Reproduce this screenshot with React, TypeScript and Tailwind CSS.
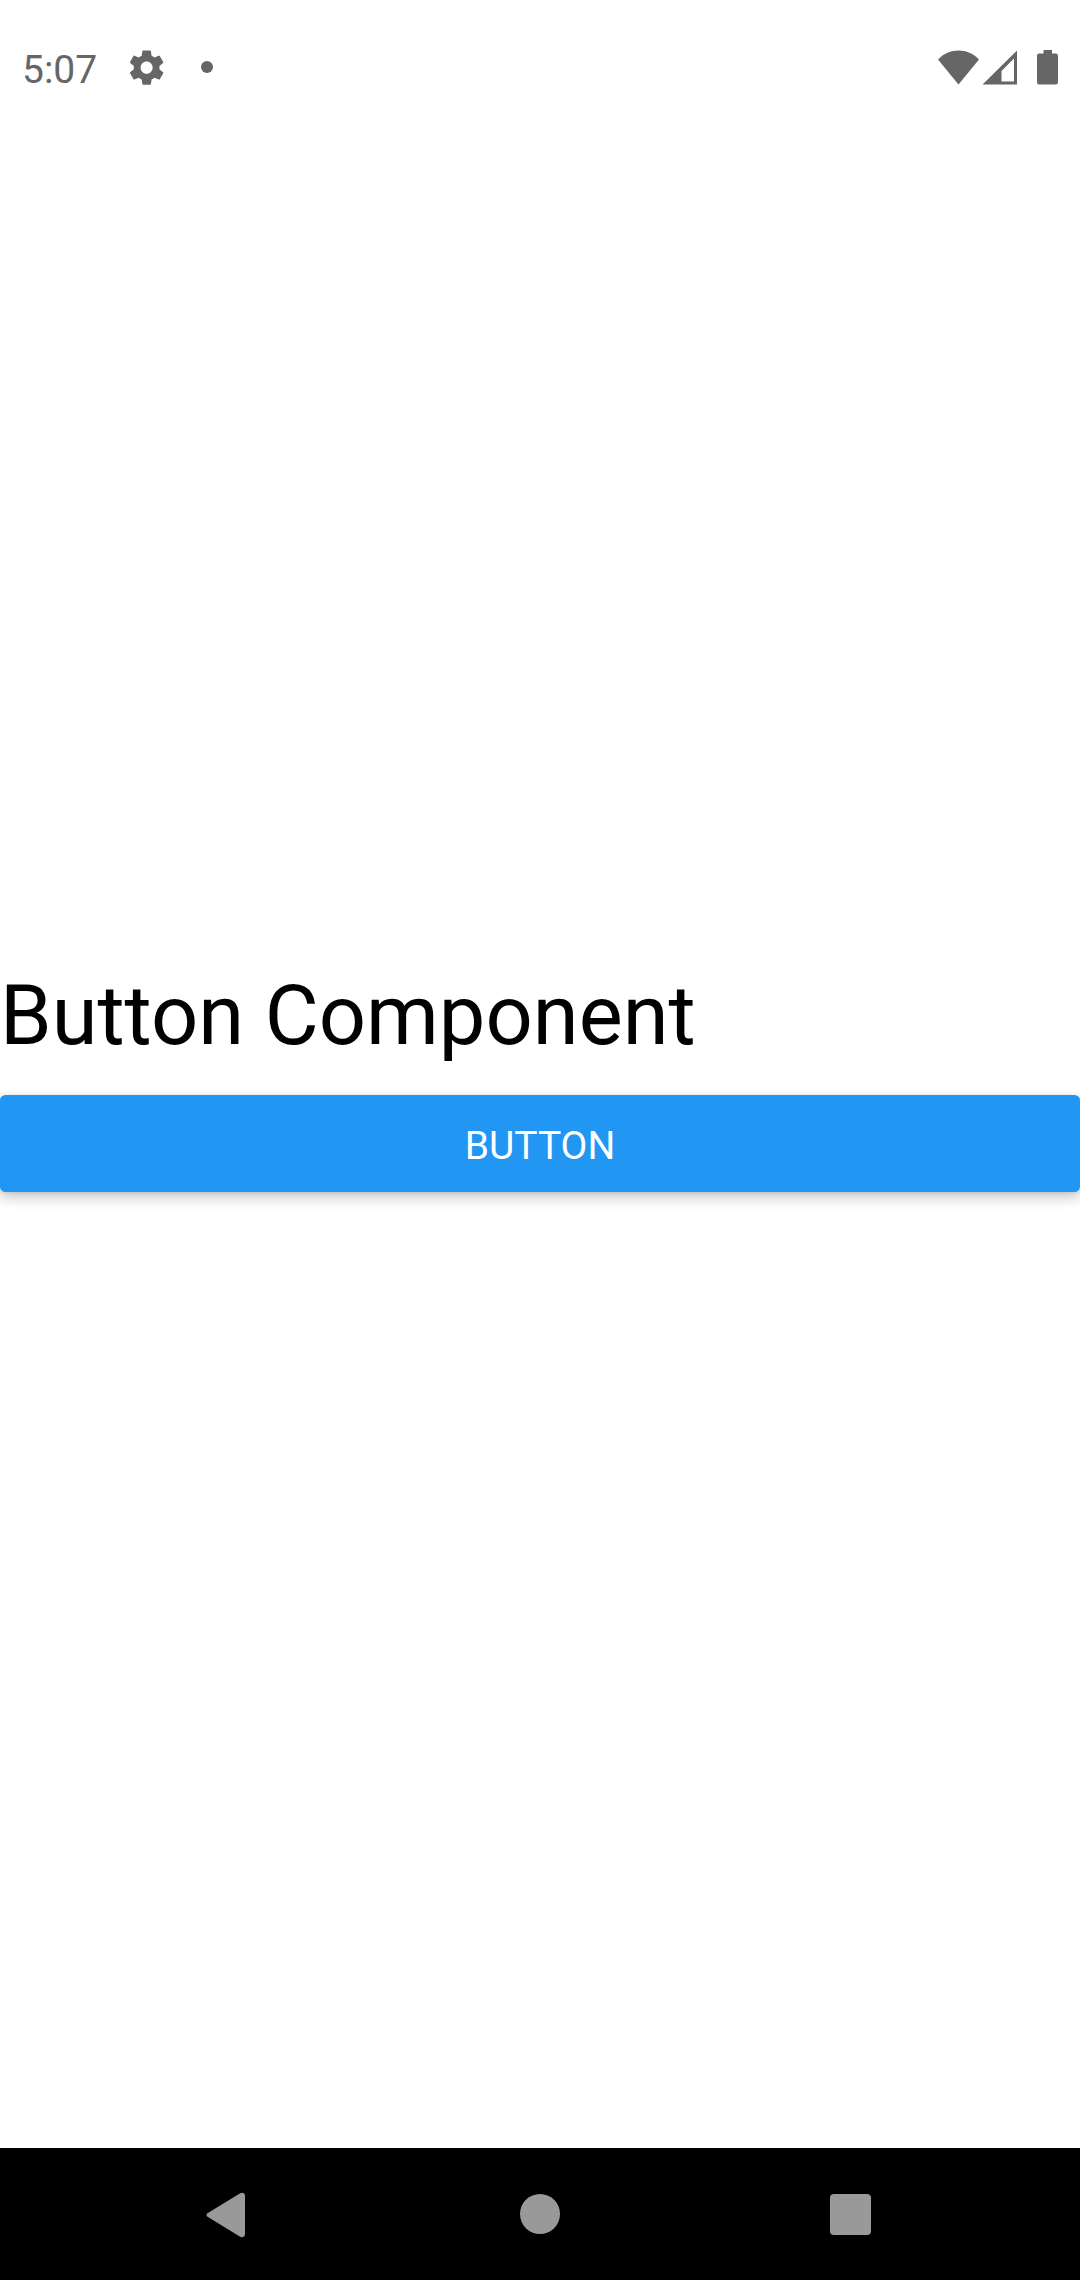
function StatusBar() {
  return (
    <header className="flex h-[136px] shrink-0 items-center justify-between pl-[22px] pr-[22px] text-[#666666]">
      <div className="flex items-center">
        <span className="w-[103.5px] pt-[3px] text-[39px] leading-[46px]">5:07</span>
        <svg className="-mt-px h-[41.25px] w-[41.25px]" viewBox="0 0 24 24" fill="currentColor">
          <path d="M19.43 12.98c.04-.32.07-.64.07-.98s-.03-.66-.07-.98l2.11-1.65c.19-.15.24-.42.12-.64l-2-3.46c-.12-.22-.39-.3-.61-.22l-2.49 1c-.52-.4-1.08-.73-1.69-.98l-.38-2.65C14.46 2.18 14.25 2 14 2h-4c-.25 0-.46.18-.49.42l-.38 2.65c-.61.25-1.17.59-1.69.98l-2.49-1c-.23-.09-.49 0-.61.22l-2 3.46c-.13.22-.07.49.12.64l2.11 1.65c-.04.32-.07.65-.07.98s.03.66.07.98l-2.11 1.65c-.19.15-.24.42-.12.64l2 3.46c.12.22.39.3.61.22l2.49-1c.52.4 1.08.73 1.69.98l.38 2.65c.03.24.24.42.49.42h4c.25 0 .46-.18.49-.42l.38-2.65c.61-.25 1.17-.59 1.69-.98l2.49 1c.23.09.49 0 .61-.22l2-3.46c.12-.22.07-.49-.12-.64l-2.11-1.65zM12 15.5c-1.93 0-3.5-1.57-3.5-3.5s1.57-3.5 3.5-3.5 3.5 1.57 3.5 3.5-1.57 3.5-3.5 3.5z" />
        </svg>
        <span className="-mt-[2px] ml-[34px] h-[12px] w-[12px] rounded-full bg-[#666666]" />
      </div>

      <div className="flex items-center">
        {/* Wifi */}
        <svg className="-mt-px h-[35px] w-[41px]" viewBox="0 0 41 35" fill="currentColor">
          <path d="M0 9.5C5.5 3.5 13 .5 20.5 .5S35.500 3.500 41 9.500L20.500 34.500Z" />
        </svg>
        {/* Mobile signal */}
        <svg className="-mt-px ml-[2.5px] h-[35px] w-[35px]" viewBox="0 0 35 35" fill="currentColor">
          <path fillRule="evenodd" d="M35 .5V34.500H.5ZM32 8.500L19.500 21V31.500H32Z" />
        </svg>
        {/* Battery */}
        <svg className="-mt-px ml-[20.5px] h-[35px] w-[21px]" viewBox="0 0 21 35" fill="currentColor">
          <path d="M6.500 0H15V3.500H18.700Q21 3.500 21 5.800V32.200Q21 34.500 18.700 34.500H2.300Q0 34.500 0 32.200V5.800Q0 3.500 2.300 3.500H6.500Z" />
        </svg>
      </div>
    </header>
  );
}

function NavigationBar() {
  return (
    <nav className="flex h-[132px] shrink-0 items-center bg-black pl-[206px] text-[#999999]">
      <button className="mt-px h-[46px] w-[40px]" aria-label="Back">
        <svg className="h-[46px] w-[40px]" viewBox="0 0 40 46" fill="currentColor">
          <path d="M1.500 21.200L34.200 1.300Q36 .3 37.700 1.200Q39 2 39 4V42Q39 44 37.700 44.800Q36 45.700 34.200 44.700L1.500 24.800Q-.5 23 1.500 21.200Z" />
        </svg>
      </button>
      <button className="ml-[274px] h-[40px] w-[40px] rounded-full bg-[#999999]" aria-label="Home" />
      <button className="ml-[270px] mt-px h-[41px] w-[41px] rounded-[4px] bg-[#999999]" aria-label="Recents" />
    </nav>
  );
}

export default function App() {
  return (
    <div className="flex h-[2280px] w-[1080px] flex-col overflow-hidden bg-white font-['Roboto',sans-serif]">
      <StatusBar />
      <main className="flex-1 pt-[831px]">
        <h1 className="h-[128px] text-[83px] leading-[97px] text-black">Button Component</h1>
        <button className="flex h-[97px] w-full items-center justify-center rounded-[5.5px] bg-[#2196f3] pt-[6px] text-[39px] text-white shadow-[0_6px_14px_rgba(0,0,0,0.2),0_1px_5px_rgba(0,0,0,0.1)]">
          BUTTON
        </button>
      </main>
      <NavigationBar />
    </div>
  );
}
